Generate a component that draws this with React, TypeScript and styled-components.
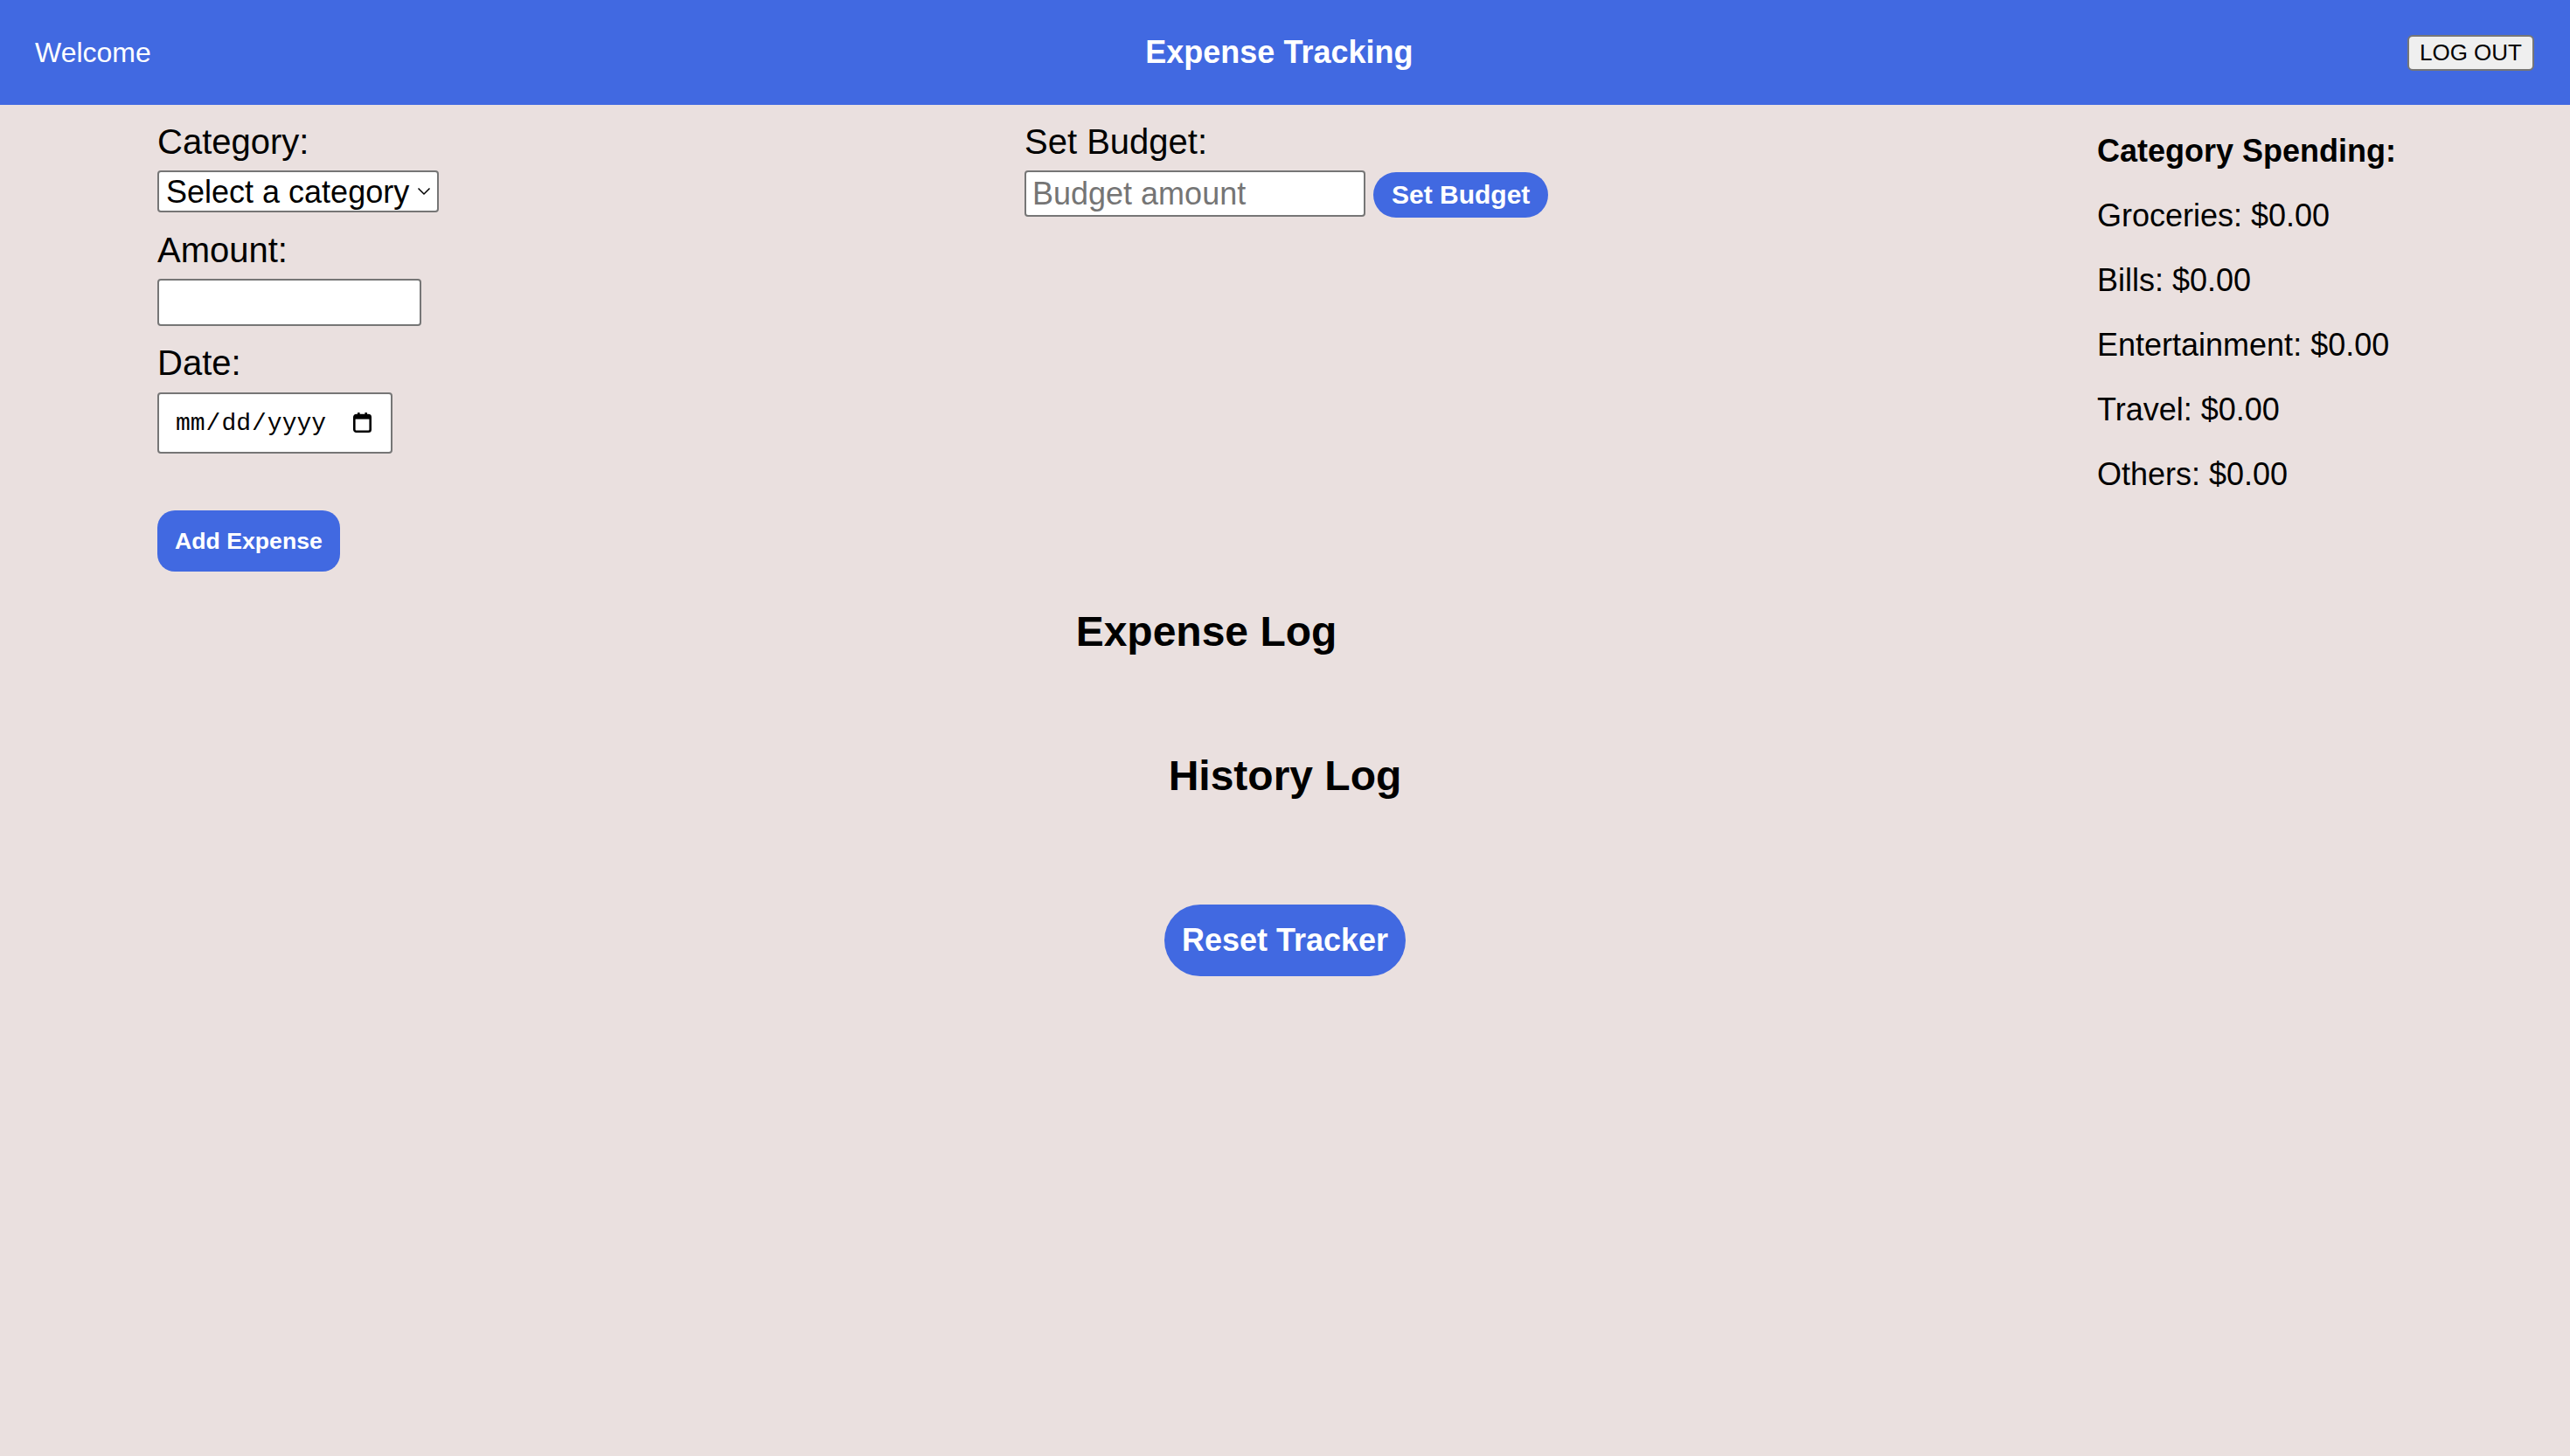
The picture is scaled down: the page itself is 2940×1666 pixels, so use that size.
import React from "react";
import styled, { createGlobalStyle } from "styled-components";

const GlobalStyle = createGlobalStyle`
  html, body {
    margin: 0;
    padding: 0;
  }
  body {
    background: #eae0df;
    font-family: "Liberation Sans", Arial, sans-serif;
    color: #000;
    min-height: 100vh;
  }
  #root {
    min-height: 100vh;
  }
`;

const BLUE = "#4169e1";

const Page = styled.div`
  min-height: 100vh;
  background: #eae0df;
`;

const Header = styled.header`
  height: 120px;
  background: ${BLUE};
  display: flex;
  align-items: center;
  justify-content: space-between;
  padding: 0 41px 0 40px;
  box-sizing: border-box;
`;

const Welcome = styled.span`
  color: #fff;
  font-size: 32px;
`;

const Title = styled.h1`
  margin: 0;
  color: #fff;
  font-size: 36px;
  font-weight: 700;
`;

const LogoutButton = styled.button`
  height: 41px;
  padding: 0 12px;
  background: #efefef;
  border: 2px solid #767676;
  border-radius: 6px;
  font-family: "Liberation Sans", Arial, sans-serif;
  font-size: 26px;
  color: #000;
  cursor: pointer;
`;

const TopRow = styled.div`
  display: grid;
  grid-template-columns: 992px 1fr 541px;
  padding-left: 180px;
`;

const FormColumn = styled.div`
  display: flex;
  flex-direction: column;
  align-items: flex-start;
  padding-top: 20px;
`;

const Label = styled.label<{ $gap?: number }>`
  display: block;
  font-size: 40px;
  line-height: 45px;
  margin-top: ${(p) => p.$gap ?? 0}px;
`;

const FieldWrap = styled.div<{ $w: number; $h: number; $top: number }>`
  position: relative;
  margin-top: ${(p) => p.$top}px;
  width: ${(p) => p.$w}px;
  height: ${(p) => p.$h}px;
`;

const Select = styled.select`
  appearance: none;
  -webkit-appearance: none;
  width: 100%;
  height: 100%;
  box-sizing: border-box;
  background: #fff;
  border: 2px solid #767676;
  border-radius: 4px;
  padding: 0 0 0 8px;
  font-family: "Liberation Sans", Arial, sans-serif;
  font-size: 36px;
  color: #000;
`;

const OverlayIcon = styled.svg<{ $right: number; $top: number }>`
  position: absolute;
  right: ${(p) => p.$right}px;
  top: ${(p) => p.$top}px;
  pointer-events: none;
`;

const TextInput = styled.input<{ $w: number; $h: number; $top?: number }>`
  width: ${(p) => p.$w}px;
  height: ${(p) => p.$h}px;
  margin-top: ${(p) => p.$top ?? 0}px;
  box-sizing: border-box;
  background: #fff;
  border: 2px solid #767676;
  border-radius: 4px;
  padding: 0 7px;
  font-family: "Liberation Sans", Arial, sans-serif;
  font-size: 36px;
  color: #000;
  outline: none;
  &::placeholder {
    color: #757575;
  }
  &::-webkit-inner-spin-button,
  &::-webkit-outer-spin-button {
    -webkit-appearance: none;
    margin: 0;
  }
`;

const DateInput = styled.input`
  width: 100%;
  height: 100%;
  box-sizing: border-box;
  background: #fff;
  border: 2px solid #767676;
  border-radius: 4px;
  padding: 0 22px 0 18px;
  font-family: "Liberation Mono", "DejaVu Sans Mono", monospace;
  font-size: 28px;
  color: #000;
  &::-webkit-calendar-picker-indicator {
    width: 22px;
    height: 22px;
    margin: 0;
    padding: 0;
    opacity: 0;
  }
`;

const PrimaryButton = styled.button<{ $size: "sm" | "md" | "lg" }>`
  background: ${BLUE};
  color: #fff;
  border: none;
  font-family: "Liberation Sans", Arial, sans-serif;
  font-weight: 700;
  cursor: pointer;
  ${(p) =>
    p.$size === "sm"
      ? `
    margin-top: 65px;
    font-size: 26.67px;
    line-height: 30px;
    padding: 20px 20px;
    border-radius: 20px;
  `
      : p.$size === "md"
      ? `
    margin-top: 2px;
    font-size: 30px;
    line-height: 34px;
    height: 52px;
    padding: 0 21px;
    border-radius: 26px;
  `
      : `
    font-size: 36px;
    line-height: 42px;
    padding: 20px 20px;
    border-radius: 41px;
  `}
`;

const BudgetColumn = styled.div`
  display: flex;
  flex-direction: column;
  align-items: flex-start;
  padding-top: 20px;
`;

const BudgetRow = styled.div`
  display: flex;
  align-items: flex-start;
  gap: 9px;
  margin-top: 10px;
`;

const SpendingColumn = styled.div`
  display: flex;
  flex-direction: column;
  padding-top: 33px;
  gap: 34px;
`;

const SpendingHeading = styled.h3`
  margin: 0;
  font-size: 36px;
  line-height: 40px;
  font-weight: 700;
`;

const SpendingItem = styled.p`
  margin: 0;
  font-size: 36px;
  line-height: 40px;
`;

const ExpenseSection = styled.section`
  padding: 0 360px 0 180px;
  margin-top: 42px;
  text-align: center;
`;

const SectionTitle = styled.h2`
  margin: 0;
  font-size: 48px;
  line-height: 54px;
  font-weight: 700;
`;

const HistorySection = styled.section`
  margin-top: 111px;
  display: flex;
  flex-direction: column;
  align-items: center;
  gap: 120px;
`;

const categories = ["Groceries", "Bills", "Entertainment", "Travel", "Others"];

export default function App() {
  return (
    <Page>
      <GlobalStyle />
      <Header>
        <Welcome>Welcome</Welcome>
        <Title>Expense Tracking</Title>
        <LogoutButton>LOG OUT</LogoutButton>
      </Header>

      <TopRow>
        <FormColumn>
          <Label htmlFor="category">Category:</Label>
          <FieldWrap $w={322} $h={48} $top={10}>
            <Select id="category" defaultValue="">
              <option value="">Select a category</option>
              {categories.map((c) => (
                <option key={c} value={c}>
                  {c}
                </option>
              ))}
            </Select>
            <OverlayIcon
              $right={9}
              $top={19}
              width="16"
              height="10"
              viewBox="0 0 16 10"
            >
              <polyline
                points="1.5,1.5 8,8 14.5,1.5"
                fill="none"
                stroke="#000"
                strokeWidth="1.5"
              />
            </OverlayIcon>
          </FieldWrap>

          <Label htmlFor="amount" $gap={21}>
            Amount:
          </Label>
          <TextInput id="amount" type="number" $w={302} $h={54} $top={10} />

          <Label htmlFor="date" $gap={20}>
            Date:
          </Label>
          <FieldWrap $w={269} $h={70} $top={11}>
            <DateInput id="date" type="date" />
            <OverlayIcon
              $right={24}
              $top={23}
              width="21"
              height="23"
              viewBox="0 0 21 23"
            >
              <rect x="5" y="0" width="2.6" height="4" rx="0.6" fill="#000" />
              <rect x="13.4" y="0" width="2.6" height="4" rx="0.6" fill="#000" />
              <rect
                x="1.3"
                y="3"
                width="18.4"
                height="18.7"
                rx="2.2"
                fill="none"
                stroke="#000"
                strokeWidth="2.6"
              />
              <rect x="1.3" y="3" width="18.4" height="4.6" fill="#000" />
            </OverlayIcon>
          </FieldWrap>

          <PrimaryButton $size="sm">Add Expense</PrimaryButton>
        </FormColumn>

        <BudgetColumn>
          <Label htmlFor="budget">Set Budget:</Label>
          <BudgetRow>
            <TextInput
              id="budget"
              type="number"
              placeholder="Budget amount"
              $w={390}
              $h={53}
            />
            <PrimaryButton $size="md">Set Budget</PrimaryButton>
          </BudgetRow>
        </BudgetColumn>

        <SpendingColumn>
          <SpendingHeading>Category Spending:</SpendingHeading>
          {categories.map((c) => (
            <SpendingItem key={c}>
              {c}: $0.00
            </SpendingItem>
          ))}
        </SpendingColumn>
      </TopRow>

      <ExpenseSection>
        <SectionTitle>Expense Log</SectionTitle>
      </ExpenseSection>

      <HistorySection>
        <SectionTitle>History Log</SectionTitle>
        <PrimaryButton $size="lg">Reset Tracker</PrimaryButton>
      </HistorySection>
    </Page>
  );
}
